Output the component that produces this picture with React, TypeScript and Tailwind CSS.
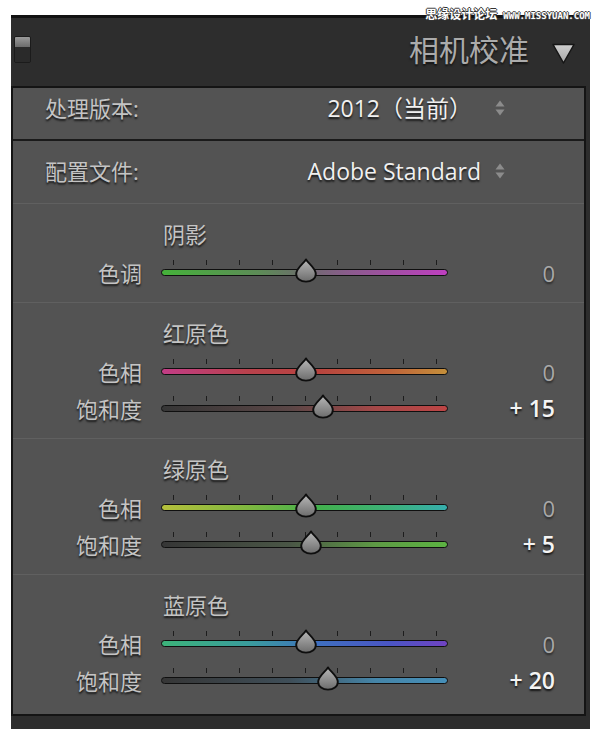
import React from "react";

type Row = {
  label: string;
  value: number;
  track: string;
};

type Section = {
  title: string;
  rows: Row[];
};

const sections: Section[] = [
  {
    title: "阴影",
    rows: [
      {
        label: "色调",
        value: 0,
        track: "bg-[linear-gradient(90deg,#45b23a_0%,#5e8a58_35%,#6c6c6c_50%,#8a5c8c_65%,#bf3fc0_100%)]",
      },
    ],
  },
  {
    title: "红原色",
    rows: [
      {
        label: "色相",
        value: 0,
        track: "bg-[linear-gradient(90deg,#c23d86_0%,#b8414c_30%,#b8443f_55%,#c0633a_80%,#c48f3a_100%)]",
      },
      {
        label: "饱和度",
        value: 15,
        track: "bg-[linear-gradient(90deg,#363636_0%,#5a4646_45%,#a54848_75%,#bd4545_100%)]",
      },
    ],
  },
  {
    title: "绿原色",
    rows: [
      {
        label: "色相",
        value: 0,
        track: "bg-[linear-gradient(90deg,#b5c03c_0%,#7fb83f_30%,#42b14d_55%,#3cb27a_80%,#36afad_100%)]",
      },
      {
        label: "饱和度",
        value: 5,
        track: "bg-[linear-gradient(90deg,#363636_0%,#4a5646_45%,#5e9a45_75%,#5cb342_100%)]",
      },
    ],
  },
  {
    title: "蓝原色",
    rows: [
      {
        label: "色相",
        value: 0,
        track: "bg-[linear-gradient(90deg,#3cb37a_0%,#3a9d9c_30%,#3f6fc0_55%,#4a55c4_80%,#7043c2_100%)]",
      },
      {
        label: "饱和度",
        value: 20,
        track: "bg-[linear-gradient(90deg,#363636_0%,#3f4e58_45%,#4585a8_75%,#468fb8_100%)]",
      },
    ],
  },
];

function Thumb() {
  return (
    <svg width="24" height="25" viewBox="0 0 24 25">
      <defs>
        <linearGradient id="thumbg" x1="0" y1="0" x2="0" y2="1">
          <stop offset="0" stopColor="#b8b8b8" />
          <stop offset="1" stopColor="#6c6c6c" />
        </linearGradient>
      </defs>
      <path
        d="M12 1.4 C13.8 5.2 21.8 10 21.8 16 C21.8 20.6 17.4 23.6 12 23.6 C6.6 23.6 2.2 20.6 2.2 16 C2.2 10 10.2 5.2 12 1.4 Z"
        fill="url(#thumbg)"
        stroke="#0e0e0e"
        strokeWidth="1.9"
        strokeLinejoin="round"
      />
    </svg>
  );
}

function Slider({ row }: { row: Row }) {
  const pct = 50 + row.value * 0.4;
  const display = row.value === 0 ? "0" : `+ ${row.value}`;
  return (
    <div className="flex h-[37px] items-center">
      <div className="w-[129px] text-right text-[22px] leading-none text-[#c4c4c4] [text-shadow:0_2px_2px_rgba(0,0,0,0.75)]">
        {row.label}
      </div>
      <div className="relative ml-[19px] h-[7px] w-[287px]">
        <div className="absolute left-[12px] right-[11px] top-[-9px] flex h-[5px] justify-between">
          {Array.from({ length: 9 }).map((_, i) => (
            <div key={i} className="h-full w-px bg-[#1d1d1d]" />
          ))}
        </div>
        <div className={`absolute inset-0 rounded-full border-[1.5px] border-[#0f0f0f] ${row.track}`} />
        <div
          className="absolute top-[-11px] h-[25px] w-[24px]"
          style={{ left: `calc(${pct}% - 11px)` }}
        >
          <Thumb />
        </div>
      </div>
      <div
        className={
          row.value === 0
            ? "w-[107px] text-right text-[22px] leading-none text-[#a9a9a9] [text-shadow:0_2px_2px_rgba(0,0,0,0.5)]"
            : "w-[107px] text-right text-[23px] font-semibold leading-none text-[#f4f4f4] [text-shadow:0_2px_2px_rgba(0,0,0,0.75)]"
        }
      >
        {display}
      </div>
    </div>
  );
}

function UpDown() {
  return (
    <svg width="12" height="18" viewBox="0 0 12 18">
      <path d="M6 1.5 L10.5 7.5 H1.5 Z" fill="#8c8c8c" />
      <path d="M6 16.5 L10.5 10.5 H1.5 Z" fill="#8c8c8c" />
    </svg>
  );
}

export default function App() {
  return (
    <div className="relative h-[741px] w-[600px] bg-white pl-[11px] pt-[15px] font-['Open_Sans','Noto_Sans_CJK_SC',sans-serif]">
      <div className="flex h-[714px] w-[579px] flex-col border-t-[3px] border-[#121212] bg-[#2d2d2d] pb-[13px] pr-[4px]">
        {/* header */}
        <div className="flex h-[68px] shrink-0 items-center pl-[3px] pr-[10px]">
          <div className="mt-[-6px] flex h-[27px] w-[17px] flex-col overflow-hidden rounded-[2px] border border-[#1b1b1b]">
            <div className="h-[10px] bg-[linear-gradient(180deg,#9a9a9a,#6c6c6c)]" />
            <div className="flex-1 bg-[#2a2a2a]" />
          </div>
          <div className="ml-auto mt-[-4px] text-[30px] leading-none text-[#ababab] [text-shadow:0_2px_2px_rgba(0,0,0,0.6)]">
            相机校准
          </div>
          <svg className="ml-[22px] mt-[2px]" width="25" height="23" viewBox="0 0 25 23">
            <defs>
              <linearGradient id="trig" x1="0" y1="0" x2="0" y2="1">
                <stop offset="0" stopColor="#cfcfcf" />
                <stop offset="1" stopColor="#a6a6a6" />
              </linearGradient>
            </defs>
            <path d="M2 2.5 H23 L12.5 21 Z" fill="url(#trig)" stroke="#151515" strokeWidth="1.5" strokeLinejoin="round" />
          </svg>
        </div>

        {/* inner panel */}
        <div className="flex flex-1 flex-col border-2 border-[#141414] bg-[#535353]">
          {/* 处理版本 */}
          <div className="flex h-[53px] shrink-0 items-start border-b-2 border-[#1a1a1a] pl-[32px] pr-[78px] pt-[5px]">
            <div className="flex h-[30px] w-full items-center">
              <span className="text-[22px] leading-none text-[#c4c4c4] [text-shadow:0_2px_2px_rgba(0,0,0,0.75)]">
                处理版本:
              </span>
              <span className="ml-auto text-[23px] leading-none text-[#f0f0f0] [text-shadow:0_2px_2px_rgba(0,0,0,0.75)]">
                2012（当前）
              </span>
              <span className="ml-[22px] flex items-center">
                <UpDown />
              </span>
            </div>
          </div>
          {/* 配置文件 */}
          <div className="flex h-[63px] shrink-0 items-start border-b border-[#606060] pl-[32px] pr-[78px] pt-[15px]">
            <div className="flex h-[30px] w-full items-center">
              <span className="text-[22px] leading-none text-[#c4c4c4] [text-shadow:0_2px_2px_rgba(0,0,0,0.75)]">
                配置文件:
              </span>
              <span className="ml-auto text-[23px] leading-none text-[#f0f0f0] [text-shadow:0_2px_2px_rgba(0,0,0,0.75)]">
                Adobe Standard
              </span>
              <span className="ml-[13px] flex items-center">
                <UpDown />
              </span>
            </div>
          </div>

          {sections.map((s, idx) => (
            <div
              key={s.title}
              className={
                idx === sections.length - 1
                  ? "flex flex-1 flex-col pt-[16px]"
                  : "flex shrink-0 flex-col border-b border-[#606060] pb-[11px] pt-[16px]"
              }
            >
              <div className="h-[28px] pl-[150px] text-[22px] leading-[28px] text-[#c4c4c4] [text-shadow:0_2px_2px_rgba(0,0,0,0.75)]">
                {s.title}
              </div>
              <div className="mt-[6px] flex flex-col">
                {s.rows.map((r) => (
                  <Slider key={s.title + r.label} row={r} />
                ))}
              </div>
            </div>
          ))}
        </div>
      </div>

      {/* watermark */}
      <div className="absolute right-[10px] top-[9px] flex items-end gap-[6px] leading-none">
        <span className="text-[12px] font-bold text-white [text-shadow:-1px_0_0_#333,1px_0_0_#333,0_-1px_0_#333,0_1px_0_#333]">
          思缘设计论坛
        </span>
        <span className="font-['DejaVu_Sans_Mono',monospace] text-[9px] font-bold text-white [text-shadow:-1px_0_0_#444,1px_0_0_#444,0_-1px_0_#444,0_1px_0_#444]">
          WWW.MISSYUAN.COM
        </span>
      </div>
    </div>
  );
}
